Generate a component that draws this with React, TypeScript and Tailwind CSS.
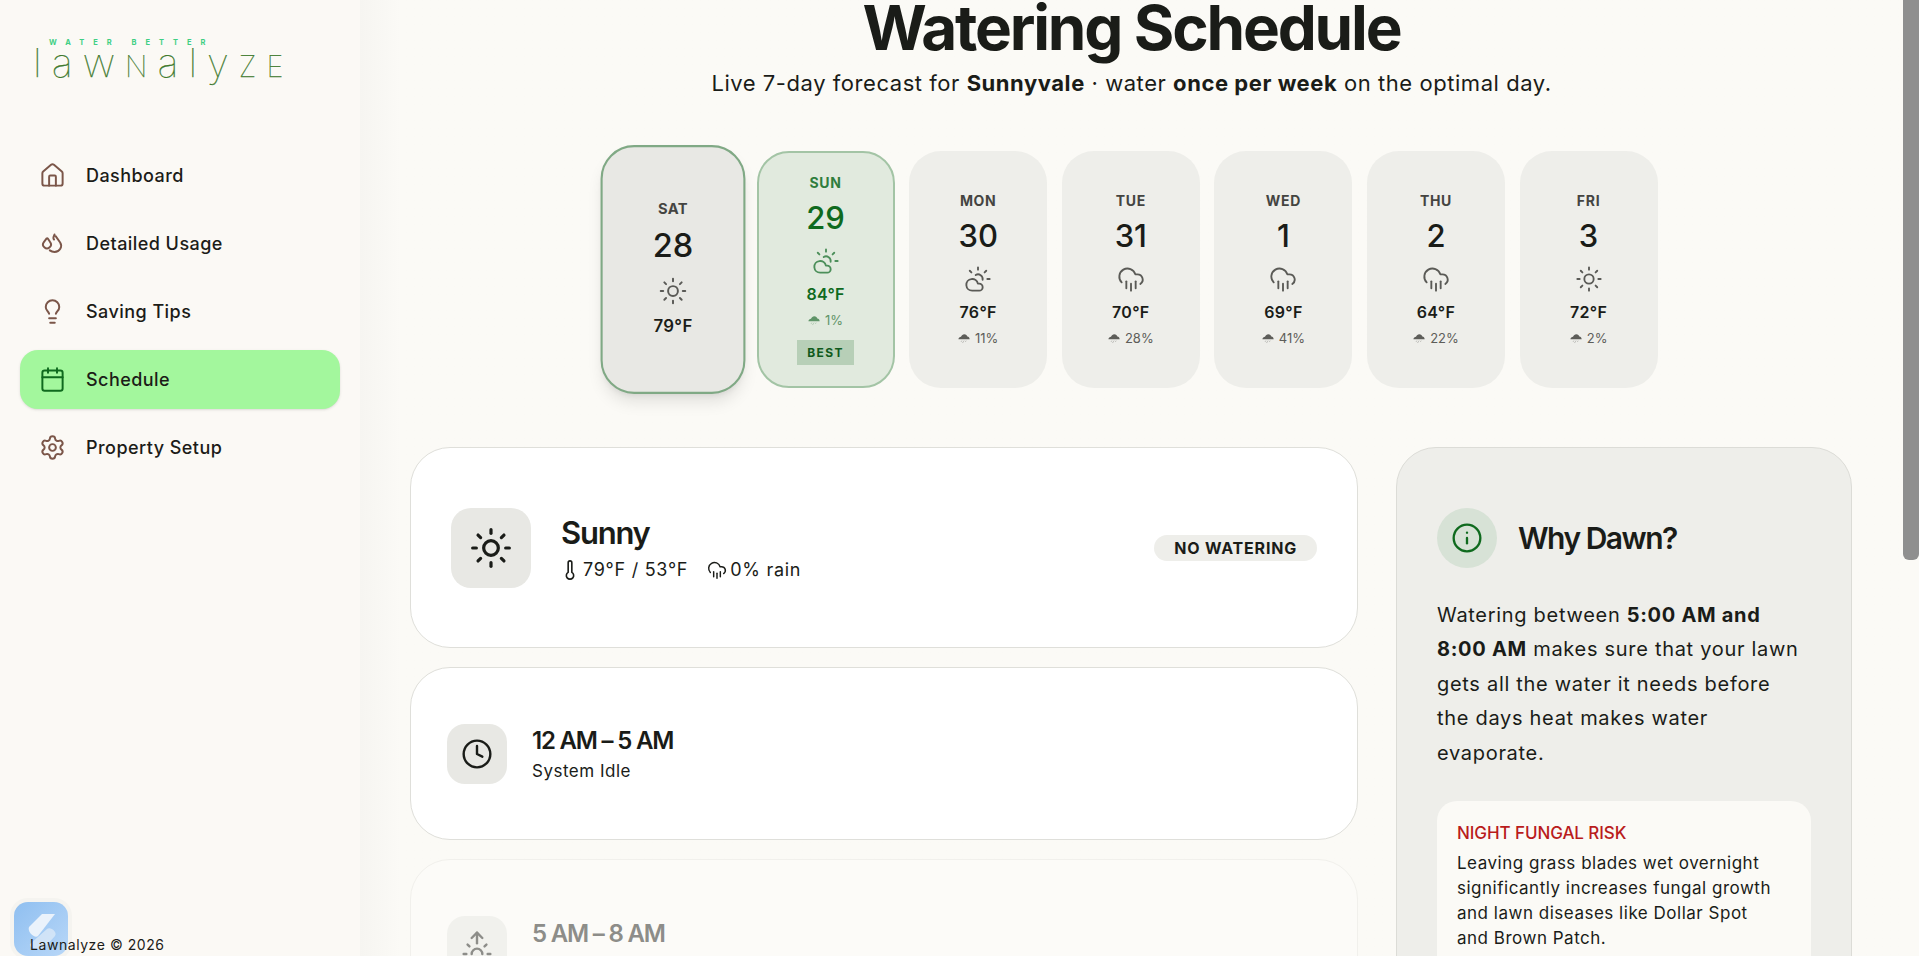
import { Calendar, Clock, CloudRain, CloudSun, House, Info, Lightbulb, Settings, Sun, Sunrise, Thermometer } from "lucide-react";
import type { ReactNode } from "react";

const sans = "font-['Inter','Liberation_Sans',sans-serif]";
const body = "font-['Inter','Open_Sans',sans-serif]";

const navigation = [
  { name: "Dashboard", icon: House },
  { name: "Detailed Usage", icon: DropsIcon },
  { name: "Saving Tips", icon: Lightbulb },
  { name: "Schedule", icon: Calendar, active: true },
  { name: "Property Setup", icon: Settings },
];

const days = [
  { day: "MON", date: "30", icon: CloudSun, temp: "76°F", rain: "11%" },
  { day: "TUE", date: "31", icon: CloudRain, temp: "70°F", rain: "28%" },
  { day: "WED", date: "1", icon: CloudRain, temp: "69°F", rain: "41%" },
  { day: "THU", date: "2", icon: CloudRain, temp: "64°F", rain: "22%" },
  { day: "FRI", date: "3", icon: Sun, temp: "72°F", rain: "2%" },
];

function DropsIcon({ className, strokeWidth = 2 }: { className?: string; strokeWidth?: number }) {
  return (
    <svg viewBox="0 0 24 24" fill="none" stroke="currentColor" strokeWidth={strokeWidth} strokeLinecap="round" strokeLinejoin="round" className={className}>
      <path d="M6.800 7.500 4.300 10.700a3.500 3.500 0 1 0 5.600 0L7.800 7.500a.6.6 0 0 0-1 0Z" />
      <path d="M13.800 4c-.4 1.300-1 2-1 3 0 .6.200 1 .6 1.500M14.800 5.500l4 5.600c2.300 3.600-.3 8.400-5 8.400-1.600 0-3-.5-4.200-1.400" />
    </svg>
  );
}

// small filled cloud with a drizzle under it, used next to the rain chance
function RainDot({ className }: { className?: string }) {
  return (
    <svg viewBox="0 0 14 12" className={className}>
      <path d="M.5 7C.5 5 2.200 4 3.500 4 4.300 2 5.700 1 7.300 1c2 0 3.300 1.300 3.600 2.800 1.500.1 2.700 1.500 2.700 3.200Z" fill="currentColor" />
      <path d="M4.500 8.500l-.8 1.300M7 8.500l-.8 1.300M9.500 8.500l-.8 1.300M5.800 10.300l-.5 1" stroke="currentColor" strokeWidth=".7" fill="none" opacity=".7" />
    </svg>
  );
}

function Sidebar() {
  return (
    <aside className="relative w-[360px] h-full shrink-0 bg-[#fbf9f5] text-[#1c1c18]">
      {/* Logo */}
      <div className="h-[120px] relative">
        <div className={`${sans} absolute left-[49px] top-[38px] text-[7.5px] leading-[9px] font-bold tracking-[1.2em] text-[#3fcf83]`}>WATER BETTER</div>
        <div className={`${sans} absolute left-[33px] top-[47px] font-thin text-[40px] leading-[32px] tracking-[0.25em] text-[#3f7a2e] [-webkit-text-stroke:0.25px_#3f7a2e]`}>
          law<span className="uppercase text-[29px]">n</span>aly<span className="uppercase text-[29px]">ze</span>
        </div>
      </div>

      <nav className="mt-[26px] px-5 flex flex-col gap-[9px]">
        {navigation.map((item) => (
          <a
            key={item.name}
            className={
              item.active
                ? "flex items-center gap-[20px] h-[59px] px-[19px] rounded-[18px] bg-[#a3f79d] shadow-sm"
                : "flex items-center gap-[20px] h-[59px] px-[19px] rounded-[18px]"
            }
          >
            <item.icon strokeWidth={1.75} className={item.active ? "w-[27px] h-[27px] text-[#0f6a1e]" : "w-[27px] h-[27px] text-[#7b5649]"} />
            <span className={`${body} text-[18px] font-medium tracking-[0.025em]`}>{item.name}</span>
          </a>
        ))}
      </nav>

      <div className={`${body} absolute left-[30px] bottom-[1px] z-10 text-[14px] leading-[20px] tracking-[0.04em]`}>Lawnalyze © 2026</div>

      {/* Floating badge */}
      <div className="absolute left-[10px] top-[898px] w-[62px] h-[62px] rounded-[18px] bg-[#f5f4f0] p-1">
        <div className="w-[54px] h-[54px] rounded-[14px] bg-gradient-to-br from-[#8fbff0] to-[#b8d7f8] flex items-center justify-center">
          <svg viewBox="0 0 54 54" className="w-[54px] h-[54px]">
            <path d="M15 25 28 12h13L24 34c-3 3-11-4-9-9Z" fill="#eaf2fb" />
            <path d="M16 42 33 27c3-3 11 3 8 7L30 46c-3 3-16 0-14-4Z" fill="#dbe9f8" fillOpacity=".8" />
          </svg>
        </div>
      </div>
    </aside>
  );
}

function DayCard({ day, date, icon: Icon, temp, rain }: (typeof days)[number]) {
  return (
    <div className="w-[138px] shrink-0 h-[237px] rounded-[32px] bg-[#eeeeea] flex flex-col items-center pt-[42px]">
      <div className={`${sans} text-[14px] leading-[16px] font-bold tracking-[0.05em] text-[#444441]`}>{day}</div>
      <div className={`${sans} mt-[8px] text-[31px] leading-[38px] font-medium text-[#1a1c18]`}>{date}</div>
      <Icon strokeWidth={1.6} className="mt-[10px] w-7 h-7 text-[#5a5a56]" />
      <div className={`${sans} mt-[8px] text-[16px] leading-[22px] font-semibold tracking-[0.02em] text-[#1a1c18]`}>{temp}</div>
      <div className={`${sans} mt-[6px] flex items-center gap-[5px] text-[13px] leading-[18px] text-[#5d5d59]`}>
        <RainDot className="w-3 h-[11px]" />
        {rain}
      </div>
    </div>
  );
}

function ForecastStrip() {
  return (
    <div className="w-[1055px] mx-auto mt-[53px] flex gap-[14.6px] items-start">
      <div className="w-[138px] shrink-0 h-[237px] rounded-[32px] bg-[#e8e8e4] border-2 border-[#80a985] shadow-lg scale-105 flex flex-col items-center pt-[51px]">
        <div className={`${sans} text-[14px] leading-[16px] font-bold tracking-[0.03em] text-[#444441]`}>SAT</div>
        <div className={`${sans} mt-[8px] text-[31px] leading-[38px] font-medium text-[#1a1c18]`}>28</div>
        <Sun strokeWidth={1.6} className="mt-[10px] w-7 h-7 text-[#5a5a56]" />
        <div className={`${sans} mt-[8px] text-[16px] leading-[22px] font-semibold tracking-[0.02em] text-[#1a1c18]`}>79°F</div>
      </div>
      <div className="w-[138px] shrink-0 h-[237px] rounded-[32px] bg-[#e1eade] border-2 border-[#a3c4a5] flex flex-col items-center pt-[22px]">
        <div className={`${sans} text-[14px] leading-[16px] font-bold tracking-[0.05em] text-[#2f7d3c]`}>SUN</div>
        <div className={`${sans} mt-[8px] text-[31px] leading-[38px] font-medium text-[#0f6a1e]`}>29</div>
        <CloudSun strokeWidth={1.6} className="mt-[10px] w-7 h-7 text-[#4c8f5a]" />
        <div className={`${sans} mt-[8px] text-[16px] leading-[22px] font-semibold tracking-[0.02em] text-[#0f6a1e]`}>84°F</div>
        <div className={`${sans} mt-[6px] flex items-center gap-[5px] text-[13px] leading-[18px] text-[#5f9468]`}>
          <RainDot className="w-3 h-[11px]" />
          1%
        </div>
        <div className={`${sans} mt-[11px] w-[57px] h-[25px] flex items-center justify-center bg-[#b7cfb7] text-[12px] font-bold tracking-[0.12em] text-[#0f5a1c]`}>BEST</div>
      </div>
      {days.map((d) => (
        <DayCard key={d.day} {...d} />
      ))}
    </div>
  );
}

function Row({ children, className }: { children: ReactNode; className: string }) {
  return <div className={`rounded-[40px] border flex items-center ${className}`}>{children}</div>;
}

function Timeline() {
  return (
    <div className="w-[948px] shrink-0 flex flex-col gap-[19px]">
      <Row className="h-[201px] bg-white border-[#dfdfda] px-10">
        <div className="w-20 h-20 rounded-[20px] bg-[#e8e8e4] flex items-center justify-center">
          <Sun strokeWidth={1.75} className="w-11 h-11 text-[#1a1c18]" />
        </div>
        <div className="ml-[30px] flex-1">
          <div className={`${sans} text-[31px] leading-[38px] font-semibold tracking-[-0.04em] text-[#1a1c18]`}>Sunny</div>
          <div className={`${body} mt-[6px] flex items-center text-[18px] leading-[24px] tracking-[0.04em] text-[#1a1c18]`}>
            <Thermometer strokeWidth={1.75} className="-ml-[2px] w-[22px] h-[22px]" />
            <span className="ml-[2px]">79°F / 53°F</span>
            <CloudRain strokeWidth={1.75} className="ml-[19px] w-5 h-5" />
            <span className="ml-[3px]">0% rain</span>
          </div>
        </div>
        <div className={`${sans} h-[26px] px-5 rounded-full bg-[#eeeeea] flex items-center text-[16px] font-bold tracking-[0.05em] text-[#1a1c18]`}>NO WATERING</div>
      </Row>
      <Row className="h-[173px] bg-white border-[#dfdfda] pl-[36px]">
        <div className="w-[60px] h-[60px] rounded-[18px] bg-[#e8e8e4] flex items-center justify-center">
          <Clock strokeWidth={1.8} className="w-8 h-8 text-[#1a1c18]" />
        </div>
        <div className="ml-[25px]">
          <div className={`${sans} text-[24px] leading-[32px] font-semibold tracking-[-0.05em] text-[#1a1c18]`}>12 AM – 5 AM</div>
          <div className={`${body} mt-[3px] text-[17px] leading-[22px] tracking-[0.03em] text-[#1a1c18]`}>System Idle</div>
        </div>
      </Row>
      <Row className="h-[173px] bg-[#fcfbf8] border-[#f1f0ec] pl-[36px]">
        <div className="w-[60px] h-[60px] rounded-[18px] bg-[#f1f1ed] flex items-center justify-center">
          <Sunrise strokeWidth={1.8} className="w-8 h-8 text-[#8d8d89]" />
        </div>
        <div className="ml-[25px] pb-6">
          <div className={`${sans} text-[24px] leading-[32px] font-semibold tracking-[-0.05em] text-[#8d8d89]`}>5 AM – 8 AM</div>
        </div>
      </Row>
    </div>
  );
}

function WhyDawn() {
  return (
    <div className="w-[456px] h-[600px] shrink-0 rounded-[40px] bg-[#eeeeea] border border-[#dcdcd7] px-10 pt-[60px]">
      <div className="flex items-center gap-[21px]">
        <div className="w-[60px] h-[60px] rounded-full bg-[#d7e2d6] flex items-center justify-center">
          <Info strokeWidth={1.75} className="w-8 h-8 text-[#0f6a1e]" />
        </div>
        <div className={`${sans} text-[30px] leading-[38px] font-semibold tracking-[-0.05em] text-[#1a1c18]`}>Why Dawn?</div>
      </div>
      <p className={`${body} mt-[30px] whitespace-nowrap text-[20px] leading-[34.4px] tracking-[0.035em] text-[#1a1c18]`}>
        Watering between <b className="font-bold">5:00 AM and</b>
        <br />
        <b className="font-bold">8:00 AM</b> makes sure that your lawn
        <br />
        gets all the water it needs before
        <br />
        the days heat makes water
        <br />
        evaporate.
      </p>
      <div className="mt-[31px] rounded-[20px] bg-[#fbfaf6] p-5 h-[300px]">
        <div className={`${sans} text-[17px] leading-[24px] font-medium tracking-[-0.005em] text-[#b91c1c]`}>NIGHT FUNGAL RISK</div>
        <p className={`${body} mt-[6px] whitespace-nowrap text-[17px] leading-[25px] tracking-[0.03em] text-[#1a1c18]`}>
          Leaving grass blades wet overnight
          <br />
          significantly increases fungal growth
          <br />
          and lawn diseases like Dollar Spot
          <br />
          and Brown Patch.
        </p>
      </div>
    </div>
  );
}

export default function App() {
  return (
    <div className="flex w-full h-[956px] overflow-hidden bg-[#fbfaf6]">
      <Sidebar />
      <main className="relative flex-1 min-w-0 overflow-hidden bg-gradient-to-r from-[#f6f5f1] to-[#fbfaf6] to-[40px]">
        <h1 className={`${sans} h-[56px] text-center text-[62px] leading-[56px] font-bold tracking-[-0.035em] text-[#1a1c18]`}>Watering Schedule</h1>
        <p className={`${body} mt-[12px] text-center text-[22px] leading-[30px] tracking-[0.025em] text-[#1a1c18]`}>
          Live 7-day forecast for <b className="font-bold">Sunnyvale</b> · water <b className="font-bold">once per week</b> on the optimal day.
        </p>
        <ForecastStrip />
        <div className="mt-[59px] pl-[50px] flex gap-[38px] items-start">
          <Timeline />
          <WhyDawn />
        </div>
      </main>
      {/* Scrollbar */}
      <div className="w-4 shrink-0 bg-[#fbfaf6]">
        <div className="w-4 h-[560px] bg-[#8f8f8f] rounded-b-[6px]" />
      </div>
    </div>
  );
}
